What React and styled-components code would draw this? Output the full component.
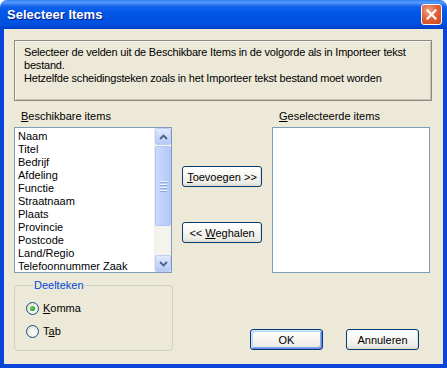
import React from "react";
import styled, { createGlobalStyle } from "styled-components";

const GlobalStyle = createGlobalStyle`
  html, body { margin: 0; padding: 0; background: #ffffff; }
  body { font-family: "Liberation Sans", Arial, sans-serif; font-size: 11px; color: #000; }
  * { box-sizing: border-box; }
`;

const Window = styled.div`
  width: 447px;
  height: 368px;
  display: flex;
  flex-direction: column;
`;

const TitleBar = styled.div`
  height: 29px;
  flex: none;
  display: flex;
  align-items: center;
  justify-content: space-between;
  padding: 0 5px 0 7px;
  border-radius: 7px 7px 0 0;
  background: linear-gradient(
    to bottom,
    #2f7cf6 0%,
    #5a9bfb 8%,
    #1463ee 22%,
    #0056e6 45%,
    #0052e0 80%,
    #0048d6 92%,
    #003fc8 100%
  );
`;

const Title = styled.div`
  color: #fff;
  font-weight: bold;
  font-size: 13px;
  text-shadow: 1px 1px 0 #0a1c8a;
`;

const CloseButton = styled.div`
  width: 21px;
  height: 21px;
  border: 1px solid #fff;
  border-radius: 3px;
  display: flex;
  align-items: center;
  justify-content: center;
  background: radial-gradient(circle at 35% 30%, #f3a486 0%, #e2633c 45%, #cf4317 100%);
`;

const Frame = styled.div`
  flex: 1;
  background: #ece9d8;
  border-style: solid;
  border-color: #0845d8;
  border-width: 0 4px 4px 4px;
  display: flex;
  flex-direction: column;
  padding: 11px 11px 0 10px;
`;

const InfoBox = styled.div`
  height: 61px;
  border: 1px solid #8d8a7e;
  box-shadow: inset 1px 1px 0 #f4f3ee, inset -1px -1px 0 #c4c1b4;
  padding: 5px 9px;
  line-height: 13px;
  letter-spacing: -0.2px;
  white-space: nowrap;
`;

const Columns = styled.div`
  margin-top: 9px;
  display: grid;
  grid-template-columns: 158px 100px 158px;
  grid-template-rows: 13px 146px;
  row-gap: 4px;
`;

const Label = styled.div`
  padding-left: 7px;
  line-height: 13px;
`;

const ListBox = styled.div`
  border: 1px solid #7f9db9;
  background: #fff;
  display: flex;
  overflow: hidden;
`;

const Items = styled.div`
  flex: 1;
  padding: 2px 3px;
  line-height: 13px;
  white-space: nowrap;
  overflow: hidden;
`;

const ScrollBar = styled.div`
  width: 17px;
  flex: none;
  display: flex;
  flex-direction: column;
  background: #f4f3ee;
  border-left: 1px solid #eeede5;
`;

const ScrollButton = styled.div`
  height: 17px;
  flex: none;
  border: 1px solid #bccdf5;
  border-radius: 2px;
  background: linear-gradient(to bottom, #e0e9fe 0%, #c6d5fc 60%, #b4c8f6 100%);
  display: flex;
  align-items: center;
  justify-content: center;
`;

const Thumb = styled.div`
  height: 80px;
  flex: none;
  margin-top: 1px;
  border: 1px solid #b2c6f4;
  border-radius: 2px;
  background: linear-gradient(to right, #cddafd 0%, #bfd0fb 50%, #b4c7f6 100%);
  display: flex;
  flex-direction: column;
  align-items: center;
  justify-content: center;
  gap: 1px;
`;

const Grip = styled.div`
  width: 7px;
  height: 1px;
  background: #eef3ff;
  box-shadow: 0 1px 0 #8ca8e6;
  margin-bottom: 1px;
`;

const Track = styled.div`
  flex: 1;
`;

const Middle = styled.div`
  display: flex;
  flex-direction: column;
  align-items: center;
  padding-top: 39px;
  gap: 35px;
`;

const Button = styled.button`
  font-family: "Liberation Sans", Arial, sans-serif;
  font-size: 11px;
  color: #000;
  width: ${(p) => p.$w || 73}px;
  height: 21px;
  padding: 0;
  border: 1px solid #003c74;
  border-radius: 3px;
  background: linear-gradient(to bottom, #ffffff 0%, #f6f5f1 50%, #ecebe5 85%, #d6d0c5 100%);
  box-shadow: ${(p) =>
    p.$default
      ? "inset 1px 1px 0 #cee7ff, inset -1px -1px 0 #6982ee, inset 2px 2px 0 #bcd4f6, inset -2px -2px 0 #89ade4"
      : "inset -1px -1px 0 #e3e0d4"};
`;

const U = styled.span`
  text-decoration: underline;
`;

const Bottom = styled.div`
  margin-top: 6px;
  display: flex;
  align-items: flex-end;
`;

const GroupBox = styled.fieldset`
  width: 159px;
  height: 72px;
  margin: 0;
  padding: 10px 0 0 11px;
  border: 1px solid #d0d0bf;
  border-radius: 4px;
  display: flex;
  flex-direction: column;
  gap: 10px;
`;

const Legend = styled.legend`
  color: #0046d5;
  padding: 0 1px;
  margin-left: 7px;
  line-height: 13px;
`;

const RadioRow = styled.label`
  display: flex;
  align-items: center;
  gap: 4px;
  line-height: 13px;
`;

const RadioCircle = styled.span`
  width: 13px;
  height: 13px;
  border-radius: 50%;
  border: 1px solid #1c5180;
  background: radial-gradient(circle at 60% 60%, #ffffff 0%, #f0efe9 40%, #d9d6c9 100%);
  display: flex;
  align-items: center;
  justify-content: center;
  &::after {
    content: "";
    width: 5px;
    height: 5px;
    border-radius: 50%;
    background: ${(p) => (p.$checked ? "radial-gradient(circle at 40% 40%, #6ad56a 0%, #21a121 70%)" : "transparent")};
  }
`;

const Actions = styled.div`
  margin-left: auto;
  margin-right: 13px;
  margin-bottom: 1px;
  display: flex;
  gap: 23px;
`;

const Arrow = ({ up }) => (
  <svg width="9" height="6" viewBox="0 0 9 6">
    <path
      d={up ? "M1 5 L4.5 1.5 L8 5" : "M1 1 L4.5 4.5 L8 1"}
      fill="none"
      stroke="#4d6185"
      strokeWidth="1.8"
    />
  </svg>
);

const available = [
  "Naam",
  "Titel",
  "Bedrijf",
  "Afdeling",
  "Functie",
  "Straatnaam",
  "Plaats",
  "Provincie",
  "Postcode",
  "Land/Regio",
  "Telefoonnummer Zaak",
];

export default function App() {
  return (
    <>
      <GlobalStyle />
      <Window>
        <TitleBar>
          <Title>Selecteer Items</Title>
          <CloseButton>
            <svg width="11" height="11" viewBox="0 0 11 11">
              <path d="M1.5 1.5 L9.5 9.5 M9.5 1.5 L1.5 9.5" stroke="#fff" strokeWidth="2.2" strokeLinecap="square" />
            </svg>
          </CloseButton>
        </TitleBar>
        <Frame>
          <InfoBox>
            Selecteer de velden uit de Beschikbare Items in de volgorde als in Importeer tekst
            <br />
            bestand.
            <br />
            Hetzelfde scheidingsteken zoals in het Importeer tekst bestand moet worden
          </InfoBox>
          <Columns>
            <Label>
              <U>B</U>eschikbare items
            </Label>
            <div />
            <Label>
              <U>G</U>eselecteerde items
            </Label>
            <ListBox>
              <Items>
                {available.map((item) => (
                  <div key={item}>{item}</div>
                ))}
              </Items>
              <ScrollBar>
                <ScrollButton>
                  <Arrow up />
                </ScrollButton>
                <Thumb>
                  <Grip />
                  <Grip />
                  <Grip />
                  <Grip />
                </Thumb>
                <Track />
                <ScrollButton>
                  <Arrow />
                </ScrollButton>
              </ScrollBar>
            </ListBox>
            <Middle>
              <Button $w={80}>
                <U>T</U>oevoegen &gt;&gt;
              </Button>
              <Button $w={80}>
                &lt;&lt; <U>W</U>eghalen
              </Button>
            </Middle>
            <ListBox />
          </Columns>
          <Bottom>
            <GroupBox>
              <Legend>Deelteken</Legend>
              <RadioRow>
                <RadioCircle $checked />
                <span>
                  <U>K</U>omma
                </span>
              </RadioRow>
              <RadioRow>
                <RadioCircle />
                <span>
                  T<U>a</U>b
                </span>
              </RadioRow>
            </GroupBox>
            <Actions>
              <Button $default>OK</Button>
              <Button>Annuleren</Button>
            </Actions>
          </Bottom>
        </Frame>
      </Window>
    </>
  );
}
